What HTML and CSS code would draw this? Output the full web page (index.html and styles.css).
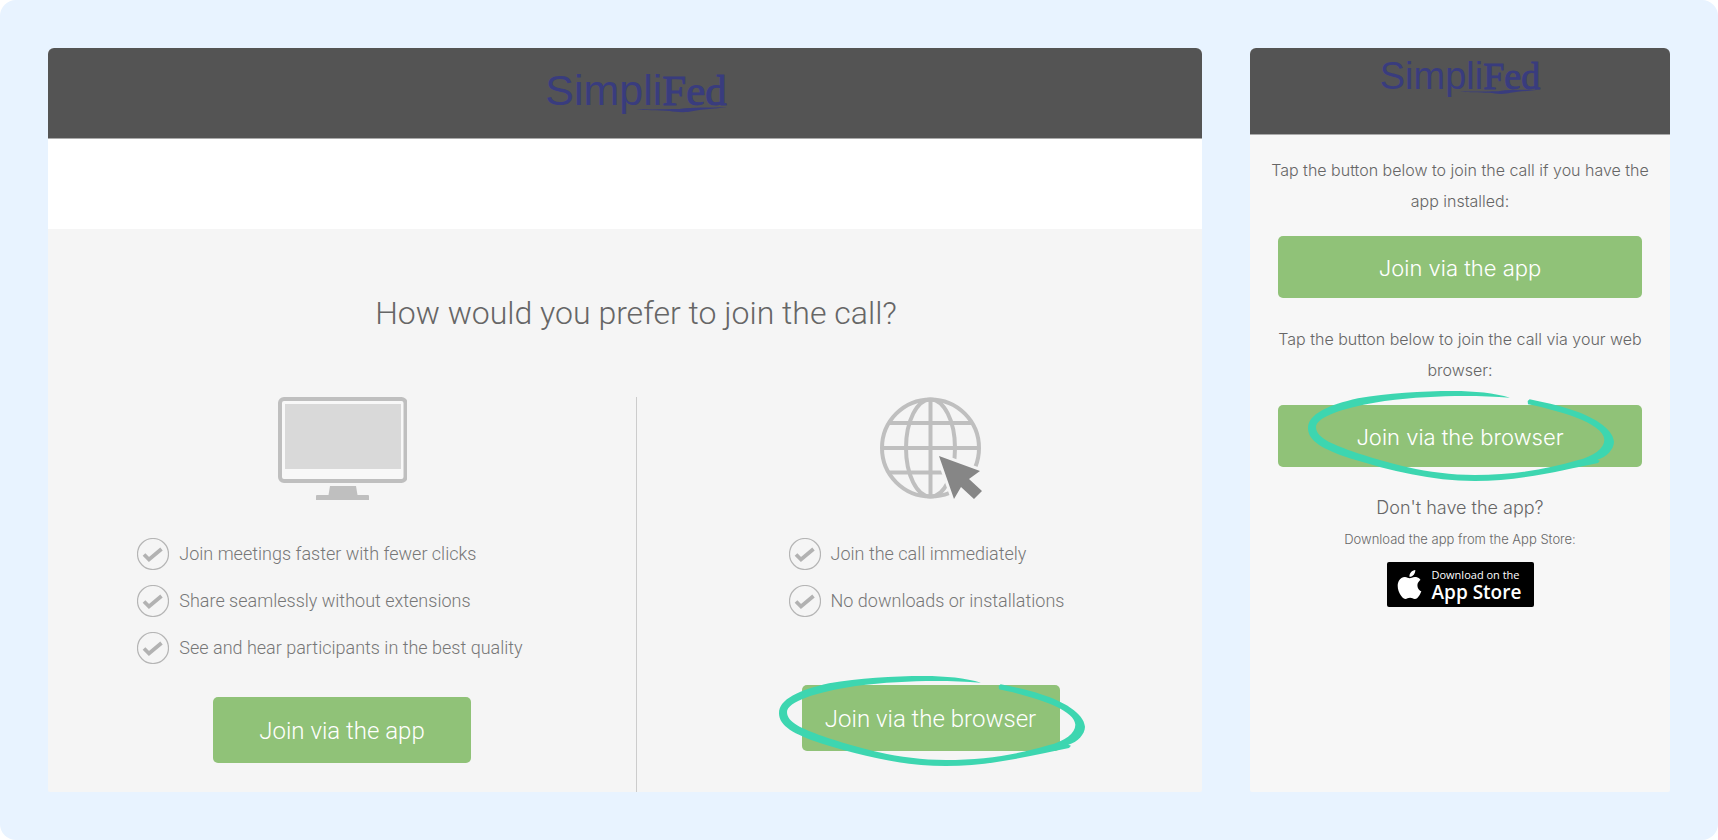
FILE: index.html
```html
<!doctype html>
<html lang="en">
<head>
    <meta charset="UTF-8">
    <meta name="viewport" content="width=device-width, initial-scale=1.0">
    <title>SimpliFed - Join the call</title>

    <link rel="stylesheet" href="styles.css">
</head>
<body>

<svg width="0" height="0" class="defs" aria-hidden="true">
    <symbol id="check" viewBox="0 0 32 32">
        <circle cx="16" cy="16" r="15.5" fill="none" stroke="#b5b5b5" stroke-width="1.200"/>
        <path d="M7 16.500l5 5L24.500 11" fill="none" stroke="#b2b2b2" stroke-width="3.800"/>
    </symbol>
    <symbol id="scribble" viewBox="0 0 918 270">
        <path fill="#3dd6b0" d="M606 20C560 6 500 0 435 0C340 0 240 6 150 22C60 42 0 70 0 112C0 150 45 175 125 202C250 240 370 270 500 270C640 270 770 236 870 216L876 209L868 206C895 198 918 175 918 152C915 110 850 75 790 56C750 43 705 33 665 25L659 30L660 40C740 56 888 95 889 146C889 172 858 195 808 208C720 234 620 252 500 252C360 252 230 214 130 180C70 158 24 140 24 108C24 78 110 48 230 30C370 12 500 12 606 20Z"/>
    </symbol>
    <symbol id="swoosh" viewBox="0 0 92 6">
        <path fill="#393c7e" d="M0 2C16 3 32 2 44 2C58 0 74 1 92 0C80 2 68 2 58 4C50 6 40 5 34 4C22 3 10 4 0 2Z"/>
    </symbol>
</svg>

<main class="page">
    <section class="panel desktop">
        <div class="desktop-inner">
            <header class="bar">
                <div class="logo">Simpli<span class="logo-serif">Fed</span><svg class="swoosh" aria-hidden="true"><use href="#swoosh"/></svg></div>
            </header>
            <div class="blank"></div>
            <div class="choice">
                <h1>How would you prefer to join the call?</h1>
                <div class="columns">
                    <div class="column">
                        <svg class="picture" width="130" height="104" viewBox="0 0 130 104" aria-hidden="true">
                            <rect x="3" y="2" width="125.500" height="82" rx="4" fill="#f8f8f8" stroke="#bfbfbf" stroke-width="4"/>
                            <rect x="8" y="7" width="116" height="65" fill="#d9d9d9"/>
                            <path fill="#bfbfbf" d="M53 89h26l1.500 9H91q1 0 1 1v4H39v-4q0-1 1-1h11.500z"/>
                        </svg>
                        <ul class="perks wide">
                            <li><svg aria-hidden="true"><use href="#check"/></svg>Join meetings faster with fewer clicks</li>
                            <li><svg aria-hidden="true"><use href="#check"/></svg>Share seamlessly without extensions</li>
                            <li><svg aria-hidden="true"><use href="#check"/></svg>See and hear participants in the best quality</li>
                        </ul>
                        <button class="join" type="button">Join via the app</button>
                    </div>
                    <div class="column">
                        <svg class="picture" width="102" height="104" viewBox="0 0 102 104" aria-hidden="true">
                            <g fill="none" stroke="#bfbfbf" stroke-width="4">
                                <circle cx="50.500" cy="51" r="48.500"/>
                                <ellipse cx="50.500" cy="51" rx="24.500" ry="48.500"/>
                                <path d="M50.500 2v98M2 51h97M9 26h83M9 75.500h83"/>
                            </g>
                            <path d="M59 59L100 74 89 82 102 94 94 102 81 90 74 102Z" fill="#868686" stroke="#f5f5f5" stroke-width="6" paint-order="stroke"/>
                        </svg>
                        <ul class="perks">
                            <li><svg aria-hidden="true"><use href="#check"/></svg>Join the call immediately</li>
                            <li><svg aria-hidden="true"><use href="#check"/></svg>No downloads or installations</li>
                        </ul>
                        <div class="circled">
                            <button class="join" type="button">Join via the browser</button>
                            <svg class="scribble" aria-hidden="true"><use href="#scribble"/></svg>
                        </div>
                    </div>
                </div>
            </div>
        </div>
    </section>

    <section class="panel mobile">
        <header class="bar">
            <div class="logo">Simpli<span class="logo-serif">Fed</span><svg class="swoosh" aria-hidden="true"><use href="#swoosh"/></svg></div>
        </header>
        <div class="steps">
            <p>Tap the button below to join the call if you have the app installed:</p>
            <button class="join" type="button">Join via the app</button>
            <p>Tap the button below to join the call via your web browser:</p>
            <div class="circled">
                <button class="join" type="button">Join via the browser</button>
                <svg class="scribble" aria-hidden="true"><use href="#scribble"/></svg>
            </div>
            <h2>Don't have the app?</h2>
            <p class="small">Download the app from the App Store:</p>
            <a class="badge" href="#">
                <svg width="29" height="29" viewBox="0 0 24 24" aria-hidden="true">
                    <path fill="#fff" d="M12.152 6.896c-.948 0-2.415-1.078-3.960-1.040-2.040.027-3.910 1.183-4.961 3.014-2.117 3.675-.546 9.103 1.519 12.090 1.013 1.454 2.208 3.090 3.792 3.039 1.520-.065 2.090-.987 3.935-.987 1.831 0 2.350.987 3.960.948 1.637-.026 2.676-1.480 3.676-2.948 1.156-1.688 1.636-3.325 1.662-3.415-.039-.013-3.182-1.221-3.220-4.857-.026-3.040 2.480-4.494 2.597-4.559-1.429-2.090-3.623-2.324-4.390-2.376-2-.156-3.675 1.090-4.610 1.090zM15.530 3.830c.843-1.012 1.400-2.427 1.245-3.830-1.207.052-2.662.805-3.532 1.818-.780.896-1.454 2.338-1.273 3.714 1.338.104 2.715-.688 3.559-1.701"/>
                </svg>
                <span class="badge-text">
                    <span class="badge-top">Download on the</span>
                    <span class="badge-name">App Store</span>
                </span>
            </a>
        </div>
    </section>
</main>

</body>
</html>
```
FILE: styles.css
```css
* {
    box-sizing: border-box;
}

body {
    margin: 0;
    background-color: #FFF;
    font-family: Roboto, "Liberation Sans", sans-serif;
    font-weight: 300;
    color: #666;
}

h1, h2, p, ul {
    margin: 0;
    padding: 0;
    font-weight: 300;
}

.defs {
    position: absolute;
}

.page {
    min-height: 100vh;
    padding: 48px;
    display: grid;
    grid-template-columns: 1154fr 420fr;
    gap: 48px;
    background-color: #e8f3ff;
    border-radius: 16px;
}

.panel {
    min-width: 0;
    overflow: hidden;
    border-radius: 6px 6px 2px 2px;
    background-color: #f7f7f7;
}

/* header bar and logo */

.bar {
    display: flex;
    justify-content: center;
    align-items: flex-start;
    background-color: #545454;
    border-bottom: 1px solid #aaa;
}

.logo {
    position: relative;
    font-family: "Liberation Sans", sans-serif;
    font-size: 43px;
    font-weight: 400;
    line-height: 48px;
    color: #393c7e;
}

.logo-serif {
    font-family: "Liberation Serif", serif;
    -webkit-text-stroke: 1px #393c7e;
}

.swoosh {
    position: absolute;
    right: 0;
    bottom: 2px;
    width: 50%;
    height: 6px;
}

/* desktop page, runs a little past the panel edge */

.desktop-inner {
    height: 100%;
    margin-right: -22px;
    display: flex;
    flex-direction: column;
    background-color: #f5f5f5;
}

.desktop .bar {
    height: 91px;
    padding-top: 18px;
}

.blank {
    height: 90px;
    background-color: #FFF;
}

.choice {
    flex: 1;
    display: flex;
    flex-direction: column;
    padding-top: 64px;
}

h1 {
    margin-bottom: 64px;
    font-size: 32px;
    line-height: 40px;
    text-align: center;
}

.columns {
    flex: 1;
    display: grid;
    grid-template-columns: 1fr 1fr;
}

.column {
    display: flex;
    flex-direction: column;
    align-items: center;
}

.column + .column {
    border-left: 1px solid #ccc;
}

.picture {
    margin-bottom: 37px;
}

.perks {
    min-height: 114px;
    margin-bottom: 33px;
    padding-right: 8px;
    display: flex;
    flex-direction: column;
    gap: 15px;
    list-style: none;
    font-size: 18px;
    color: #777;
}

.perks.wide {
    padding-right: 24px;
}

.perks li {
    display: flex;
    align-items: center;
    gap: 10px;
    line-height: 32px;
}

.perks svg {
    width: 32px;
    height: 32px;
}

.join {
    width: 258px;
    height: 66px;
    padding: 2px 0 0;
    border: 0;
    border-radius: 5px;
    background-color: #90c278;
    color: #FFF;
    font: inherit;
    font-size: 24px;
    cursor: pointer;
}

.circled {
    position: relative;
}

.scribble {
    position: absolute;
    top: -9px;
    left: 50%;
    width: 306px;
    height: 90px;
    margin-left: -152px;
    pointer-events: none;
}

/* mobile page */

.mobile {
    font-family: Inter, "Liberation Sans", sans-serif;
}

.mobile .bar {
    height: 87px;
    padding-top: 7px;
}

.mobile .logo {
    font-size: 38px;
    line-height: 42px;
}

.steps {
    padding: 20px 16px;
    text-align: center;
}

.steps p {
    font-size: 16px;
    line-height: 31px;
}

.steps .join {
    width: calc(100% - 24px);
    height: 62px;
    margin: 19px 0 26px;
    font-size: 22px;
}

.mobile .scribble {
    top: 5px;
}

h2 {
    font-size: 18px;
    line-height: 30px;
}

.steps .small {
    font-size: 13px;
    line-height: 32px;
}

.badge {
    width: 147px;
    height: 45px;
    margin: 7px auto 0;
    padding-left: 8px;
    display: flex;
    align-items: center;
    gap: 8px;
    border-radius: 2px;
    background-color: #000;
    color: #FFF;
    font-family: "Open Sans", sans-serif;
    text-align: left;
    text-decoration: none;
}

.badge-text {
    display: flex;
    flex-direction: column;
}

.badge-top {
    font-size: 11px;
    font-weight: 500;
    line-height: 14px;
}

.badge-name {
    font-size: 19px;
    font-weight: 600;
    line-height: 20px;
}
```
